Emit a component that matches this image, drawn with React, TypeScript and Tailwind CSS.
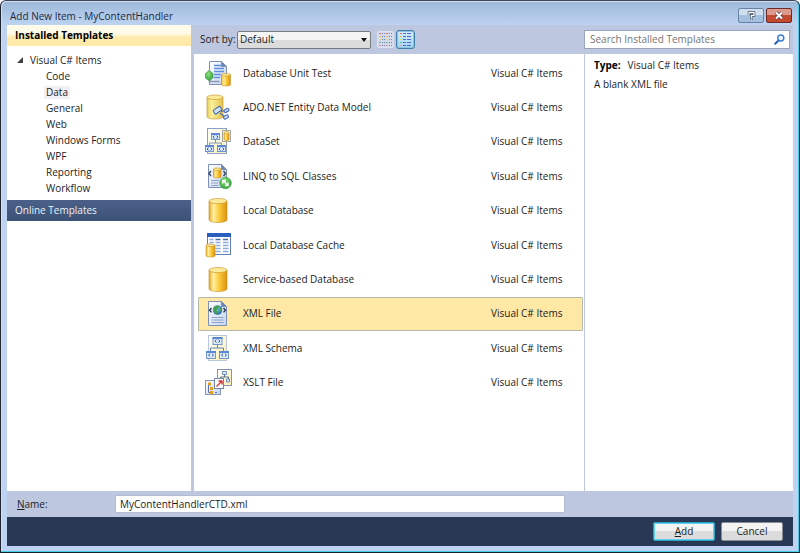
import React, { useState } from 'react'

type IconName = 'unitTest' | 'entity' | 'dataset' | 'linq' | 'database' | 'cache' | 'xml' | 'schema' | 'xslt'

interface Template {
  name: string
  icon: IconName
  description: string
}

const CATEGORIES = ['Code', 'Data', 'General', 'Web', 'Windows Forms', 'WPF', 'Reporting', 'Workflow']

const TEMPLATES: Template[] = [
  { name: 'Database Unit Test', icon: 'unitTest', description: 'A database unit test' },
  { name: 'ADO.NET Entity Data Model', icon: 'entity', description: 'An ADO.NET Entity Data Model' },
  { name: 'DataSet', icon: 'dataset', description: 'A DataSet for using data' },
  { name: 'LINQ to SQL Classes', icon: 'linq', description: 'LINQ to SQL classes' },
  { name: 'Local Database', icon: 'database', description: 'An empty local database' },
  { name: 'Local Database Cache', icon: 'cache', description: 'A local database cache' },
  { name: 'Service-based Database', icon: 'database', description: 'An empty service database' },
  { name: 'XML File', icon: 'xml', description: 'A blank XML file' },
  { name: 'XML Schema', icon: 'schema', description: 'A blank XML schema' },
  { name: 'XSLT File', icon: 'xslt', description: 'An XSLT file' },
]

const Gradients: React.FC = () => (
  <svg className="absolute size-0" aria-hidden="true">
    <defs>
      <linearGradient id="gold" x1="0" x2="1">
        <stop offset="0" stopColor="#e8a824" />
        <stop offset=".25" stopColor="#fff0a4" />
        <stop offset=".55" stopColor="#fccb3a" />
        <stop offset="1" stopColor="#dd9212" />
      </linearGradient>
      <linearGradient id="paleGold" x1="0" x2="1">
        <stop offset="0" stopColor="#e6cf58" />
        <stop offset=".3" stopColor="#fbf09e" />
        <stop offset="1" stopColor="#e0c24a" />
      </linearGradient>
      <linearGradient id="page" x1="0" y1="0" x2="1" y2="1">
        <stop offset="0" stopColor="#ffffff" />
        <stop offset="1" stopColor="#c3d3ee" />
      </linearGradient>
      <linearGradient id="cream" x1="0" y1="0" x2="1" y2="1">
        <stop offset="0" stopColor="#ffffff" />
        <stop offset="1" stopColor="#fcefae" />
      </linearGradient>
      <radialGradient id="globe" cx=".4" cy=".35" r=".7">
        <stop offset="0" stopColor="#8fd0f5" />
        <stop offset="1" stopColor="#1d5fa8" />
      </radialGradient>
      <radialGradient id="green" cx=".4" cy=".3" r=".8">
        <stop offset="0" stopColor="#8be07c" />
        <stop offset="1" stopColor="#2a9c34" />
      </radialGradient>
    </defs>
  </svg>
)

interface ShapeProps {
  x: number
  y: number
  w?: number
  h?: number
  fill?: string
}

const Cylinder: React.FC<ShapeProps> = ({ x, y, w = 18, h = 24, fill = 'url(#gold)' }) => {
  const r = w / 2
  const ry = Math.max(w / 7, 1.2)
  return (
    <g stroke="#c48f24" strokeWidth=".6">
      <path
        d={`M${x} ${y + ry}v${h - 2 * ry}a${r} ${ry} 0 0 0 ${w} 0v${-(h - 2 * ry)}z`}
        fill={fill}
      />
      <ellipse cx={x + r} cy={y + ry} rx={r} ry={ry} fill="#fcea98" />
    </g>
  )
}

const Page: React.FC<ShapeProps> = ({ x, y, w = 19, h = 24 }) => (
  <g stroke="#7c90b5" strokeWidth="1">
    <path d={`M${x} ${y}h${w - 5}l5 5v${h - 5}h${-w}z`} fill="url(#page)" />
    <path d={`M${x + w - 5} ${y}v5h5z`} fill="#6d87b8" />
  </g>
)

const Node: React.FC<ShapeProps> = ({ x, y, w = 8, h = 6 }) => (
  <g>
    <rect x={x} y={y} width={w} height={h} fill="#dce9fb" stroke="#7395cc" />
    <path d={`M${x - 0.5} ${y + 0.5}h${w + 1}`} stroke="#5b88d4" strokeWidth="2" />
    <path
      d={`M${x + w / 2 - 1} ${y + 2.2}l-1.500 1.400 1.500 1.400M${x + w / 2 + 1} ${y + 2.2}l1.500 1.400-1.500 1.400`}
      fill="none"
      stroke="#2f5cb0"
      strokeWidth="1"
    />
  </g>
)

const ICONS: Record<IconName, React.ReactNode> = {
  unitTest: (
    <>
      <Page x={4.5} y={1.5} w={17} h={23} />
      <path d="M9 5.500h7M9 8.500h10M9 11.500h10M9 14.500h7M9 17.500h6" stroke="#5f8de0" strokeWidth="1.300" />
      <path d="M4.500 18v3.500h10" fill="none" stroke="#8b99b4" strokeWidth="1.500" />
      <path d="M.5 13.500l3.500-3 4 3v4L4.500 21l-4-3z" fill="url(#green)" stroke="#3f9a4c" strokeWidth=".7" />
      <Cylinder x={16.5} y={13.5} w={9} h={12.5} />
    </>
  ),
  entity: (
    <>
      <Cylinder x={2} y={1} w={16} h={24} fill="url(#paleGold)" />
      <g fill="#d5e4fa" stroke="#4a72ba" strokeWidth="1.200">
        <path d="M15 19l5 4M16 17.500l5-1" fill="none" />
        <rect x="8.500" y="14" width="8" height="4.500" rx="1" transform="rotate(-35 12.500 16.200)" />
        <rect x="19" y="15" width="5" height="2.800" rx="1" transform="rotate(-30 21.500 16.400)" />
        <rect x="18.500" y="21.500" width="5" height="3" rx="1" transform="rotate(-30 21 23)" />
      </g>
    </>
  ),
  dataset: (
    <>
      <rect x="2.500" y=".5" width="19" height="25" fill="url(#cream)" stroke="#8ca0c6" />
      <path d="M10.500 12v3M4.500 18v-3h12v3" fill="none" stroke="#7a96c6" />
      <Node x={6.5} y={5.5} />
      <Node x={0.5} y={17.5} />
      <Node x={12.5} y={17.5} />
      <rect x="17.500" y="2.500" width="8" height="11" fill="#fff7cf" stroke="#a3a9a8" />
      <Cylinder x={19} y={3.5} w={5} h={9} />
    </>
  ),
  linq: (
    <>
      <Page x={3.5} y={1.5} w={18} h={23} />
      <Cylinder x={8.5} y={5} w={7.5} h={10} />
      <path d="M6 8l-2 2.500L6 13M18.500 8l2 2.500-2 2.500" fill="none" stroke="#35435c" strokeWidth="1.400" />
      <path d="M6 17.500h8M6 20h7M6 22.500h7" stroke="#8fa5cc" strokeWidth="1.200" />
      <circle cx="20.500" cy="20" r="5.800" fill="url(#green)" stroke="#2b9634" strokeWidth=".6" />
      <path d="M18.500 18l4 4M17.800 20.500v-3h3M23 19.500v3h-3" fill="none" stroke="#fff" strokeWidth="1.300" />
    </>
  ),
  database: <Cylinder x={4} y={1.5} w={18} h={24} />,
  cache: (
    <>
      <rect x="2.500" y="1.500" width="23" height="21" fill="#fff" stroke="#5f7fb8" />
      <path d="M2 3h24" stroke="#2a5fbe" strokeWidth="4" />
      <path d="M10.500 7.500h5M18 7.500h5" stroke="#4b6da8" strokeWidth="1.400" />
      <path
        d="M4.500 7.500h4M4.500 10.500h4M10.500 10.500h5M18 10.500h5.500M10.500 13.500h5M18 13.500h5.500M10.500 16.500h5M18 16.500h5.500M10.500 19.500h5M18 19.500h5.500"
        stroke="#8eacdf"
        strokeWidth="1.700"
      />
      <Cylinder x={1} y={12} w={9} h={13} />
    </>
  ),
  xml: (
    <>
      <Page x={3.5} y={1.5} w={18} h={24} />
      <circle cx="12.500" cy="10" r="4.800" fill="url(#globe)" />
      <path d="M9 7l3-1.500 2 1-1 2.500-2 1 2 1.500-1 3-2-1-1-3zM15 8l2 1v3l-2-1z" fill="#3fa345" />
      <path d="M6.500 8l-2 2.200 2 2.200M18.500 8l2 2.200-2 2.200" fill="none" stroke="#26344d" strokeWidth="1.400" />
      <path d="M6.500 17.500h12M6.500 20h12M6.500 22.500h12" stroke="#8ea3c8" strokeWidth="1.200" />
    </>
  ),
  schema: (
    <>
      <rect x="3.500" y=".5" width="18" height="25" fill="url(#cream)" stroke="#b9c6de" />
      <path d="M12.500 10v3M5.500 16v-3h13v3" fill="none" stroke="#6584b6" />
      <Node x={8} y={2.5} w={9} h={7} />
      <Node x={1.5} y={16.5} w={9} h={7} />
      <Node x={14.5} y={16.5} w={9} h={7} />
    </>
  ),
  xslt: (
    <>
      <rect x="12.500" y=".5" width="14" height="16" fill="url(#cream)" stroke="#8594b0" />
      <path d="M19.500 5v3M15.500 10V8h8v2" fill="none" stroke="#5a6d8c" />
      <path d="M17.500 2.500h4v3h-4zM14 10h3v3h-3zM21.500 10h3v3h-3z" fill="#dce9fb" stroke="#5478b4" strokeWidth=".8" />
      <rect x=".5" y="11.500" width="15" height="14" fill="url(#page)" stroke="#8594b0" />
      <path d="M3 13.500h3v3H3zM5 18h3v3H5zM5 22h3v3H5z" fill="#e2a021" />
      <path d="M3.500 16v7.500H5M10 19.500h2M10 23.500h2" fill="none" stroke="#5b77ab" />
      <rect x="9.500" y="9.500" width="9" height="10" fill="#fff" stroke="#7587a9" />
      <path d="M11.500 17.500l5-5M13.500 12h3.500v3.500" fill="none" stroke="#d13a36" strokeWidth="1.400" />
    </>
  ),
}

const TemplateIcon: React.FC<{ name: IconName }> = ({ name }) => (
  <svg viewBox="0 0 27 27" className="size-[27px] shrink-0" aria-hidden="true">
    {ICONS[name]}
  </svg>
)

const DOT_COLORS = ['#ec6f68', '#e8c04a', '#e6e44e', '#6fb78a', '#f29a94']

const SmallIconsGlyph: React.FC = () => (
  <svg viewBox="0 0 13 13" className="size-[13px]" aria-hidden="true">
    {DOT_COLORS.map((color, i) => (
      <g key={color}>
        <path d={`M0 ${i * 3 + 0.5}h2M7 ${i * 3 + 0.5}h2`} stroke={color} />
        <path
          d={`M3 ${i * 3 + 0.5}h1M5 ${i * 3 + 0.5}h1M10 ${i * 3 + 0.5}h1M12 ${i * 3 + 0.5}h1`}
          stroke="#7685d6"
        />
      </g>
    ))}
  </svg>
)

const MediumIconsGlyph: React.FC = () => (
  <svg viewBox="0 0 13 13" className="size-[13px]" aria-hidden="true">
    {DOT_COLORS.map((color, i) => (
      <g key={color}>
        <path d={`M1 ${i * 3 + 0.5}h2`} stroke={color} />
        <path d={`M4 ${i * 3 + 0.5}h3M8 ${i * 3 + 0.5}h4`} stroke="#5666cf" />
      </g>
    ))}
  </svg>
)

const TitleBar: React.FC = () => (
  <header className="flex h-[24px] items-start justify-between pl-[3px]">
    <h1 className="pt-[6px] leading-[18px] text-[#1d2a3f]">Add New Item - MyContentHandler</h1>
    <div className="flex gap-[2px] pt-[7px] pr-[1px]">
      <button
        aria-label="Help"
        className="flex h-[15px] w-[26px] items-center justify-center rounded-[2px] border border-[#6a83a5] bg-linear-to-b from-[#cfdff0] from-50% to-[#a5c0de] to-50%"
      >
        <svg viewBox="0 0 9 11" className="h-[11px] w-[9px]" fill="none" aria-hidden="true">
          <path d="M2 4.500V2.500h5v3H4.500v2M4.500 8.500v1.500" stroke="#4a5568" strokeWidth="2.600" />
          <path d="M2 4V2.500h5v3H4.500v2M4.500 8.700v1.100" stroke="#fff" strokeWidth="1.200" />
        </svg>
      </button>
      <button
        aria-label="Close"
        className="flex h-[15px] w-[26px] items-center justify-center rounded-[2px] border border-[#6f2a2a] bg-linear-to-b from-[#dc9a8c] from-50% to-[#c14a31] to-50%"
      >
        <svg viewBox="0 0 10 9" className="h-[9px] w-[10px]" fill="none" aria-hidden="true">
          <path d="M2 1.500l6 6M8 1.500l-6 6" stroke="#5c3a40" strokeWidth="3.600" />
          <path d="M2 1.500l6 6M8 1.500l-6 6" stroke="#fff" strokeWidth="2" />
        </svg>
      </button>
    </div>
  </header>
)

interface SidebarProps {
  category: string
  onSelect: (category: string) => void
}

const Sidebar: React.FC<SidebarProps> = ({ category, onSelect }) => (
  <nav className="w-[184px] shrink-0 bg-white">
    <h2 className="h-[21px] bg-linear-to-b from-[#fffbe9] from-40% to-[#ffeaa9] to-60% pl-2 leading-[21px] font-bold text-black">
      Installed Templates
    </h2>
    <div className="flex h-[154px] flex-col pt-[6px] pl-[10px]">
      <button className="flex h-4 items-center gap-[7px] text-left">
        <svg viewBox="0 0 6 6" className="size-[6px]" aria-hidden="true">
          <path d="M6 0v6H0z" fill="#404040" />
        </svg>
        Visual C# Items
      </button>
      <ul className="pl-[27px]">
        {CATEGORIES.map((item) => (
          <li key={item} className="flex h-4 items-center">
            <button
              onClick={() => onSelect(item)}
              className={`px-[2px] leading-[13px] ${item === category ? 'bg-[#f2f0f4]' : ''}`}
            >
              {item}
            </button>
          </li>
        ))}
      </ul>
    </div>
    <button className="block h-[21px] w-full bg-linear-to-b from-[#4a6088] to-[#3d5277] pl-2 text-left text-[#eef2f8]">
      Online Templates
    </button>
  </nav>
)

const App: React.FC = () => {
  const [category, setCategory] = useState('Data')
  const [selected, setSelected] = useState('XML File')
  const [fileName, setFileName] = useState('MyContentHandlerCTD.xml')

  const current = TEMPLATES.find((template) => template.name === selected)

  return (
    <div className="flex min-h-screen flex-col rounded-t-[6px] border border-t-[#3f4550] border-r-[#16303c] border-b-[#10222c] border-l-[#20242e] bg-[#bdd2ee] bg-linear-to-b from-[#9db8d8] to-[#bdd3f1] to-[24px] px-[6px] pb-[6px] font-['Open_Sans','Noto_Sans',sans-serif] text-[10px] text-[#1c1c1c] shadow-[inset_-1px_-1px_#45cdec,inset_1px_1px_#cfe0f4]">
      <Gradients />
      <TitleBar />
      <main className="flex flex-1 flex-col bg-[#bdc7df]">
        <div className="flex flex-1">
          <Sidebar category={category} onSelect={setCategory} />
          <div className="ml-[3px] flex flex-1 flex-col">
            <div className="flex h-[29px] items-center pr-[3px] pl-[6px]">
              <label htmlFor="sort" className="w-[37px]">
                Sort by:
              </label>
              <div className="relative h-[18px] w-[134px]">
                <select
                  id="sort"
                  className="h-full w-full appearance-none rounded-[2px] border border-[#76797f] bg-linear-to-b from-[#f4f4f4] from-50% to-[#dcdcdc] to-50% pl-[2px]"
                >
                  <option>Default</option>
                  <option>Name Ascending</option>
                  <option>Name Descending</option>
                </select>
                <svg
                  viewBox="0 0 6 4"
                  className="pointer-events-none absolute top-[7px] right-[4px] h-1 w-[6px]"
                  aria-hidden="true"
                >
                  <path d="M0 0h6L3 4z" fill="#111" />
                </svg>
              </div>
              <button
                aria-label="Small Icons"
                className="ml-[6px] flex h-[17px] w-[17px] items-center justify-center rounded-[2px] border border-[#dde2ee] bg-[#d3d9e9]"
              >
                <SmallIconsGlyph />
              </button>
              <button
                aria-label="Medium Icons"
                className="ml-[2px] flex h-[19px] w-[19px] items-center justify-center rounded-[3px] border border-[#3f7ea8] bg-linear-to-b from-[#d5edfa] to-[#9fd5f2] shadow-[inset_0_0_0_1px_#8cc3e0]"
              >
                <MediumIconsGlyph />
              </button>
              <div className="ml-auto flex h-[19px] w-[206px] items-center border border-[#9aa5bb] bg-white pr-[4px] pl-[5px]">
                <input
                  type="search"
                  aria-label="Search Installed Templates"
                  placeholder="Search Installed Templates"
                  className="min-w-0 flex-1 outline-none placeholder:text-[#757575]"
                />
                <svg viewBox="0 0 11 11" className="size-[11px]" fill="none" aria-hidden="true">
                  <path d="M5 6L1.200 9.800" stroke="#2a62b8" strokeWidth="2" strokeLinecap="round" />
                  <circle cx="6.800" cy="4" r="3" fill="#eef6ff" stroke="#3b7bd0" strokeWidth="1.400" />
                </svg>
              </div>
            </div>
            <div className="flex flex-1">
              <div className="flex-1 bg-white pt-[2px] pr-px pl-1">
                <ul className="grid h-[344px] grid-rows-10">
                  {TEMPLATES.map((template) => (
                    <li key={template.name} className="flex">
                      <button
                        onClick={() => setSelected(template.name)}
                        className={`flex w-full items-center rounded-[1px] border pl-[6px] text-left ${
                          template.name === selected ? 'border-[#b4b9a8] bg-[#ffe8a6]' : 'border-transparent'
                        }`}
                      >
                        <TemplateIcon name={template.icon} />
                        <span className="flex-1 pl-[11px]">{template.name}</span>
                        <span className="w-[91px]">Visual C# Items</span>
                      </button>
                    </li>
                  ))}
                </ul>
              </div>
              <aside className="ml-px w-[208px] bg-white px-[9px] pt-[2px] leading-[19px]">
                <p>
                  <strong className="mr-[7px] text-black">Type:</strong>Visual C# Items
                </p>
                <p>{current?.description}</p>
              </aside>
            </div>
          </div>
        </div>
        <div className="flex h-[26px] items-center pr-[228px] pl-[10px]">
          <label htmlFor="name" className="w-[98px]">
            <u>N</u>ame:
          </label>
          <input
            id="name"
            value={fileName}
            onChange={(e) => setFileName(e.target.value)}
            className="h-[18px] min-w-0 flex-1 border border-[#b3bcd1] bg-white pl-1 outline-none"
          />
        </div>
        <footer className="flex h-[29px] items-center justify-end gap-[6px] bg-[#293955] pr-[10px]">
          <button className="flex h-[19px] w-[62px] items-center justify-center rounded-[2px] border border-[#2f9fc4] bg-linear-to-b from-[#f4f4f4] from-50% to-[#dcdcdc] to-50% shadow-[inset_0_0_0_1px_#5ed3ee]">
            <span>
              <u>A</u>dd
            </span>
          </button>
          <button className="flex h-[19px] w-[62px] items-center justify-center rounded-[2px] border border-[#8a8d94] bg-linear-to-b from-[#f4f4f4] from-50% to-[#dcdcdc] to-50%">
            Cancel
          </button>
        </footer>
      </main>
    </div>
  )
}

export default App
